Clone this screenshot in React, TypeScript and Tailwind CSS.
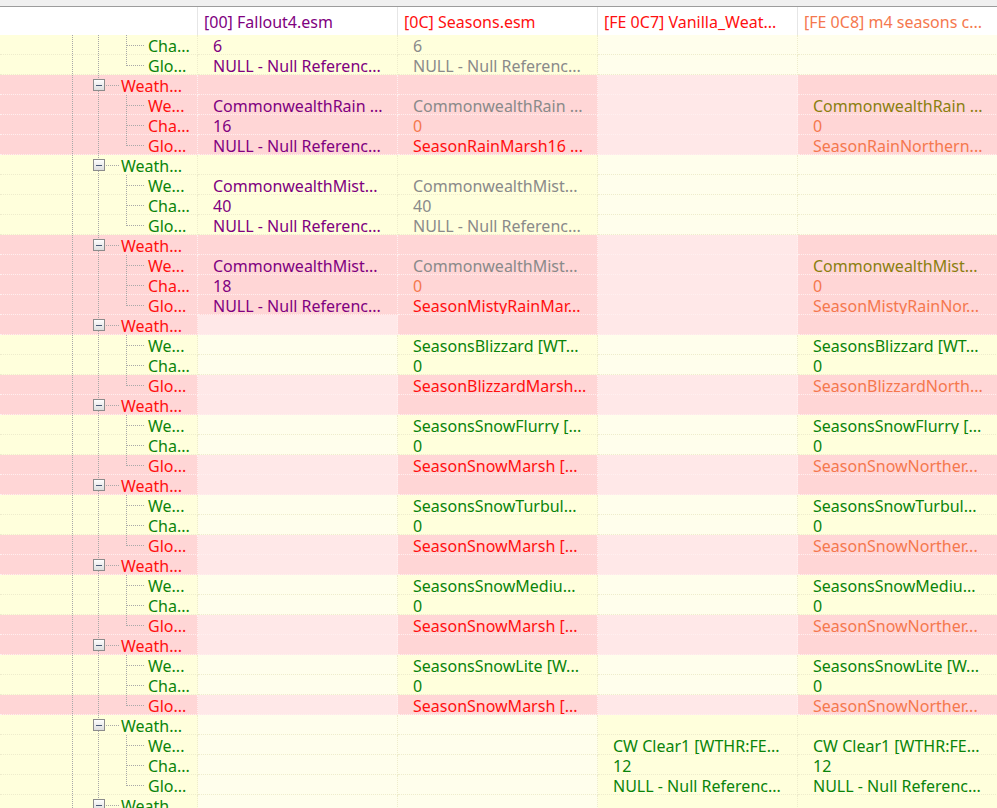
import React from 'react';

type Cell = [string, string] | null;
type Row = {
  kind: 'group' | 'child' | 'last';
  label: string;
  lc: string;
  bg: 'y' | 'p';
  cells: Cell[];
  faded: number[];
};

const G = 'text-[#0a840a]';
const R = 'text-[#ff1010]';
const P = 'text-[#800080]';
const GR = 'text-[#8a8a8a]';
const O = 'text-[#8a7f10]';
const C = 'text-[#f5784e]';

const bgClass = {
  y: 'bg-[#ffffdc]',
  yf: 'bg-[#fffeec]',
  p: 'bg-[#ffd6d6]',
  pf: 'bg-[#ffe8e8]',
};

const lineClass = {
  y: 'border-[#eeeccc]',
  p: 'border-[#fff0f0]',
};

function snowGroup(we: string, glo2: string, glo4: string): Row[] {
  return [
    { kind: 'group', label: 'Weath...', lc: R, bg: 'p', cells: [null, null, null, null], faded: [0, 2] },
    { kind: 'child', label: 'We...', lc: G, bg: 'y', cells: [null, [we, G], null, [we, G]], faded: [0, 2] },
    { kind: 'child', label: 'Cha...', lc: G, bg: 'y', cells: [null, ['0', G], null, ['0', G]], faded: [0, 2] },
    { kind: 'last', label: 'Glo...', lc: R, bg: 'p', cells: [null, [glo2, R], null, [glo4, C]], faded: [0, 2] },
  ];
}

const NULLREF = 'NULL - Null Referenc...';

const rows: Row[] = [
  { kind: 'child', label: 'Cha...', lc: G, bg: 'y', cells: [['6', P], ['6', GR], null, null], faded: [2, 3] },
  { kind: 'last', label: 'Glo...', lc: G, bg: 'y', cells: [[NULLREF, P], [NULLREF, GR], null, null], faded: [2, 3] },

  { kind: 'group', label: 'Weath...', lc: R, bg: 'p', cells: [null, null, null, null], faded: [2] },
  { kind: 'child', label: 'We...', lc: R, bg: 'p', cells: [['CommonwealthRain ...', P], ['CommonwealthRain ...', GR], null, ['CommonwealthRain ...', O]], faded: [2] },
  { kind: 'child', label: 'Cha...', lc: R, bg: 'p', cells: [['16', P], ['0', C], null, ['0', C]], faded: [2] },
  { kind: 'last', label: 'Glo...', lc: R, bg: 'p', cells: [[NULLREF, P], ['SeasonRainMarsh16 ...', R], null, ['SeasonRainNorthern...', C]], faded: [2] },

  { kind: 'group', label: 'Weath...', lc: G, bg: 'y', cells: [null, null, null, null], faded: [2, 3] },
  { kind: 'child', label: 'We...', lc: G, bg: 'y', cells: [['CommonwealthMist...', P], ['CommonwealthMist...', GR], null, null], faded: [2, 3] },
  { kind: 'child', label: 'Cha...', lc: G, bg: 'y', cells: [['40', P], ['40', GR], null, null], faded: [2, 3] },
  { kind: 'last', label: 'Glo...', lc: G, bg: 'y', cells: [[NULLREF, P], [NULLREF, GR], null, null], faded: [2, 3] },

  { kind: 'group', label: 'Weath...', lc: R, bg: 'p', cells: [null, null, null, null], faded: [2] },
  { kind: 'child', label: 'We...', lc: R, bg: 'p', cells: [['CommonwealthMist...', P], ['CommonwealthMist...', GR], null, ['CommonwealthMist...', O]], faded: [2] },
  { kind: 'child', label: 'Cha...', lc: R, bg: 'p', cells: [['18', P], ['0', C], null, ['0', C]], faded: [2] },
  { kind: 'last', label: 'Glo...', lc: R, bg: 'p', cells: [[NULLREF, P], ['SeasonMistyRainMar...', R], null, ['SeasonMistyRainNor...', C]], faded: [2] },

  ...snowGroup('SeasonsBlizzard [WT...', 'SeasonBlizzardMarsh...', 'SeasonBlizzardNorth...'),
  ...snowGroup('SeasonsSnowFlurry [...', 'SeasonSnowMarsh [...', 'SeasonSnowNorther...'),
  ...snowGroup('SeasonsSnowTurbul...', 'SeasonSnowMarsh [...', 'SeasonSnowNorther...'),
  ...snowGroup('SeasonsSnowMediu...', 'SeasonSnowMarsh [...', 'SeasonSnowNorther...'),
  ...snowGroup('SeasonsSnowLite [W...', 'SeasonSnowMarsh [...', 'SeasonSnowNorther...'),

  { kind: 'group', label: 'Weath...', lc: G, bg: 'y', cells: [null, null, null, null], faded: [0, 1] },
  { kind: 'child', label: 'We...', lc: G, bg: 'y', cells: [null, null, ['CW Clear1 [WTHR:FE...', G], ['CW Clear1 [WTHR:FE...', G]], faded: [0, 1] },
  { kind: 'child', label: 'Cha...', lc: G, bg: 'y', cells: [null, null, ['12', G], ['12', G]], faded: [0, 1] },
  { kind: 'last', label: 'Glo...', lc: G, bg: 'y', cells: [null, null, [NULLREF, G], [NULLREF, G]], faded: [0, 1] },
  { kind: 'group', label: 'Weath...', lc: G, bg: 'y', cells: [null, null, null, null], faded: [0, 1] },
];

const headers: [string, string][] = [
  ['[00] Fallout4.esm', P],
  ['[0C] Seasons.esm', R],
  ['[FE 0C7] Vanilla_Weat...', R],
  ['[FE 0C8] m4 seasons c...', C],
];

function TreeLines({ kind }: { kind: Row['kind'] }) {
  const dot = { stroke: '#a8a8a8', strokeWidth: 1, strokeDasharray: '1 1' };
  return (
    <svg width="198" height="20" className="absolute left-0 top-0" shapeRendering="crispEdges">
      <line x1="72.5" y1="0" x2="72.5" y2="20" {...dot} />
      <line x1="98.5" y1="0" x2="98.5" y2="20" {...dot} />
      {kind === 'group' ? (
        <>
          <line x1="106" y1="10.5" x2="119" y2="10.5" {...dot} />
          <defs>
            <linearGradient id="bx" x1="0" y1="0" x2="0" y2="1">
              <stop offset="0" stopColor="#ffffff" />
              <stop offset="1" stopColor="#dcdcdc" />
            </linearGradient>
          </defs>
          <rect x="93.5" y="4.5" width="11" height="11" rx="1" fill="url(#bx)" stroke="#8c8c8c" />
          <line x1="96" y1="10.5" x2="102" y2="10.5" stroke="#4a5a78" strokeWidth="1" />
        </>
      ) : (
        <>
          <line x1="126.5" y1="0" x2="126.5" y2={kind === 'last' ? '11' : '20'} {...dot} />
          <line x1="127" y1="10.5" x2="144" y2="10.5" {...dot} />
        </>
      )}
    </svg>
  );
}

function DataRow({ row }: { row: Row }) {
  const base = row.bg;
  return (
    <div className="flex h-5 shrink-0">
      <div className={`relative w-[198px] shrink-0 border-b border-r border-dotted ${lineClass[base]} ${bgClass[base]}`}>
        <TreeLines kind={row.kind} />
        <span
          className={`absolute top-0 flex h-5 items-center whitespace-nowrap pt-[2px] leading-none ${row.lc} ${
            row.kind === 'group' ? 'left-[121px]' : 'left-[148px]'
          }`}
        >
          {row.label}
        </span>
      </div>
      {row.cells.map((cell, i) => {
        const faded = row.faded.includes(i);
        const bg = base === 'y' ? (faded ? bgClass.yf : bgClass.y) : faded ? bgClass.pf : bgClass.p;
        return (
          <div
            key={i}
            className={`flex w-[200px] shrink-0 items-center overflow-hidden whitespace-nowrap border-b border-r border-dotted pl-[15px] pt-[2px] leading-none ${lineClass[base]} ${bg}`}
          >
            {cell && <span className={cell[1]}>{cell[0]}</span>}
          </div>
        );
      })}
    </div>
  );
}

export default function App() {
  return (
    <div
      className="flex h-[808px] w-[997px] flex-col overflow-hidden bg-white text-[16px]"
      style={{ fontFamily: '"Noto Sans", "Open Sans", sans-serif' }}
    >
      <div className="h-[6px] shrink-0 bg-[#f0f0f0]" />
      <div className="h-px shrink-0 bg-[#9c9c9c]" />
      <div className="flex h-[28px] shrink-0 bg-white">
        <div className="w-[198px] shrink-0 border-r border-[#e6e6e6]" />
        {headers.map(([t, c]) => (
          <div
            key={t}
            className={`flex w-[200px] shrink-0 items-center overflow-hidden whitespace-nowrap border-r border-[#e6e6e6] pl-[6px] pt-[1px] leading-none ${c}`}
          >
            {t}
          </div>
        ))}
      </div>
      <div className="flex flex-col">
        {rows.map((r, i) => (
          <DataRow key={i} row={r} />
        ))}
      </div>
    </div>
  );
}
